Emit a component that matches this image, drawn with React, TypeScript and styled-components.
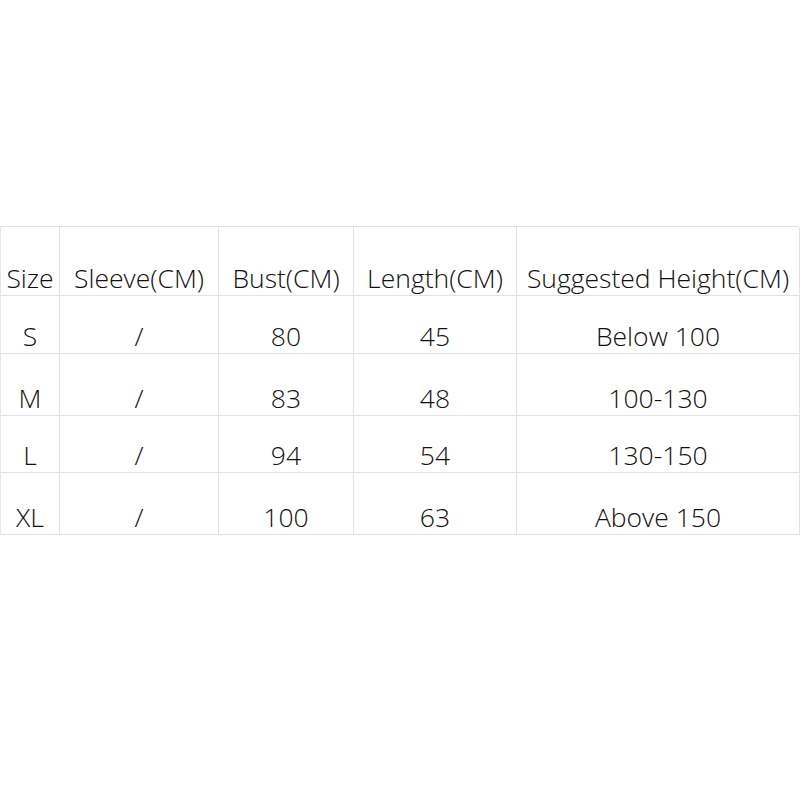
import React from "react";
import styled, { createGlobalStyle } from "styled-components";

const Global = createGlobalStyle`
  html, body { margin: 0; padding: 0; background: #ffffff; }
  body { width: 800px; height: 800px; overflow: hidden; }
`;

const Page = styled.div`
  width: 800px;
  height: 800px;
  padding-top: 226px;
  box-sizing: border-box;
  background: #ffffff;
`;

const Grid = styled.div`
  display: grid;
  grid-template-columns: 59px 159px 135px 163px 283px;
  grid-template-rows: 69px 58px 62px 57px 62px;
  width: 799px;
  border-top: 1px solid #e2e2e2;
  border-left: 1px solid #e6e6e6;
  box-sizing: border-box;
`;

const Cell = styled.div`
  display: flex;
  align-items: flex-end;
  justify-content: center;
  border-right: 1px solid #e2e2e2;
  border-bottom: 1px solid #e2e2e2;
  font-family: "Open Sans", "Noto Sans CJK SC", sans-serif;
  font-weight: 350;
  font-size: 26.5px;
  line-height: 1;
  color: #111111;
  padding-bottom: 4px;
  white-space: nowrap;
  letter-spacing: 0px;
`;

const headers = ["Size", "Sleeve(CM)", "Bust(CM)", "Length(CM)", "Suggested Height(CM)"];
const rows = [
  ["S", "/", "80", "45", "Below 100"],
  ["M", "/", "83", "48", "100-130"],
  ["L", "/", "94", "54", "130-150"],
  ["XL", "/", "100", "63", "Above 150"],
];

export default function App() {
  return (
    <Page>
      <Global />
      <Grid>
        {headers.map((h) => (
          <Cell key={h}>{h}</Cell>
        ))}
        {rows.map((r, i) =>
          r.map((c, j) => <Cell key={`${i}-${j}`}>{c}</Cell>)
        )}
      </Grid>
    </Page>
  );
}
